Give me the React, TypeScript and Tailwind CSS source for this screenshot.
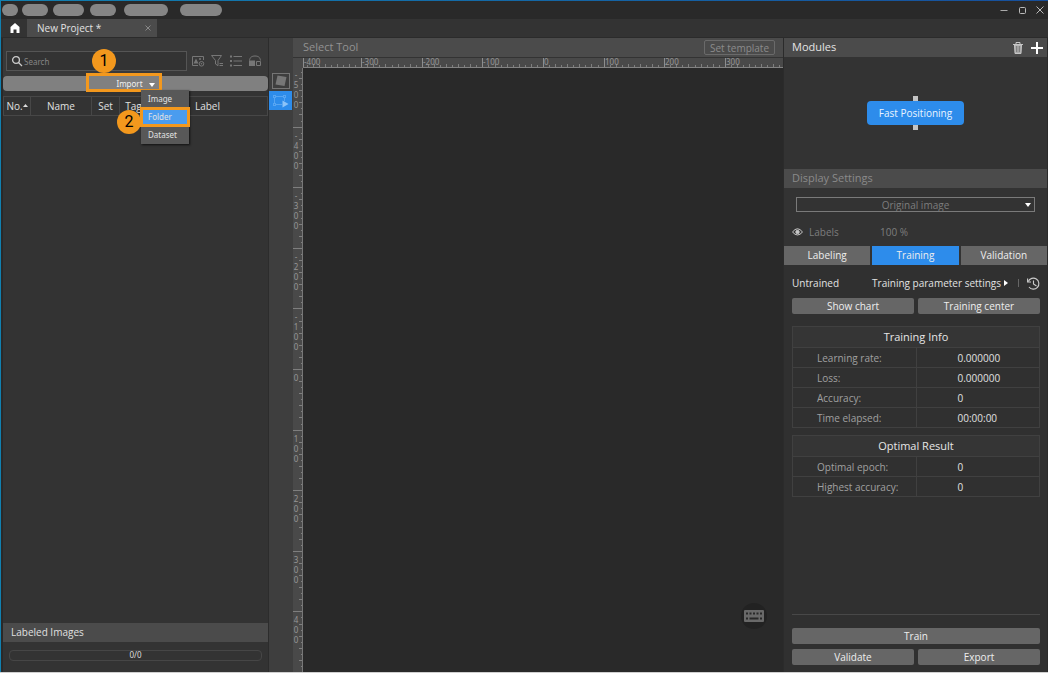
import React, { useLayoutEffect, useRef, useState } from "react";

const menus = ["w-4", "w-[26px]", "w-[31px]", "w-[26px]", "w-11", "w-[42px]"];
const menuGaps = ["ml-px", "ml-1", "ml-[5px]", "ml-1.5", "ml-2", "ml-3"];

const trainingInfo: [string, string][] = [
  ["Learning rate:", "0.000000"],
  ["Loss:", "0.000000"],
  ["Accuracy:", "0"],
  ["Time elapsed:", "00:00:00"],
];
const optimalResult: [string, string][] = [
  ["Optimal epoch:", "0"],
  ["Highest accuracy:", "0"],
];

const STEP = 60.6;

function useSize() {
  const ref = useRef<SVGSVGElement>(null);
  const [size, setSize] = useState({ width: 0, height: 0 });
  useLayoutEffect(() => {
    const el = ref.current;
    if (!el) return;
    const update = () => {
      const r = el.getBoundingClientRect();
      setSize({ width: r.width, height: r.height });
    };
    update();
    const observer = new ResizeObserver(update);
    observer.observe(el);
    return () => observer.disconnect();
  }, []);
  return { ref, size };
}

function HorizontalRuler() {
  const { ref, size } = useSize();
  const zero = 250;
  const ticks: React.ReactNode[] = [];
  const labels: React.ReactNode[] = [];
  for (let i = -40; zero + (i * STEP) / 10 < size.width; i++) {
    const x = Math.round(zero + (i * STEP) / 10) + (i === -40 ? 2 : 0);
    const major = i % 10 === 0;
    const h = major ? 10 : i % 2 === 0 ? 4 : 3;
    ticks.push(<line key={i} x1={x + 0.5} x2={x + 0.5} y1={10 - h} y2={10} stroke={major ? "#8d8d8d" : "#7e7e7e"} />);
    if (major && x + 20 < size.width) {
      labels.push(
        <text key={i} x={x + 1} y={7} fontSize="8" fill="#969696">
          {i * 10}
        </text>,
      );
    }
  }
  return (
    <svg ref={ref} className="block h-2.5 w-full shrink-0 overflow-visible bg-[#494949] font-['Noto_Sans',sans-serif]" aria-hidden="true">
      {ticks}
      {labels}
      <line x1="10" x2="100%" y1="9.5" y2="9.5" stroke="#828282" />
    </svg>
  );
}

function VerticalRuler() {
  const { ref, size } = useSize();
  const zero = 301;
  const ticks: React.ReactNode[] = [];
  const labels: React.ReactNode[] = [];
  for (let i = -49; zero + (i * STEP) / 10 < size.height; i++) {
    const y = Math.round(zero + (i * STEP) / 10);
    const w = i % 10 === 0 ? 10 : i % 2 === 0 ? 4 : 2;
    ticks.push(<line key={i} y1={y + 0.5} y2={y + 0.5} x1={10 - w} x2={10} stroke="#7e7e7e" />);
  }
  for (let n = -5; zero + n * STEP + 35 < size.height; n++) {
    const top = Math.round(zero + n * STEP) + 12;
    String(n * 100)
      .split("")
      .forEach((c, k) => {
        labels.push(
          <text key={`${n}-${k}`} x={3} y={top + k * 10} fontSize="8" textAnchor="middle" fill="#969696">
            {c}
          </text>,
        );
      });
  }
  return (
    <svg ref={ref} className="block h-full w-2.5 shrink-0 bg-[#494949] font-['Noto_Sans',sans-serif]" aria-hidden="true">
      {ticks}
      {labels}
      <line x1="9.5" x2="9.5" y1="0" y2="100%" stroke="#777" />
    </svg>
  );
}

function InfoTable({ title, rows }: { title: string; rows: [string, string][] }) {
  return (
    <table className="w-full table-fixed border-collapse border border-[#404040] text-[10px] leading-4">
      <thead>
        <tr className="h-[21px] bg-[#353535]">
          <th colSpan={2} className="border border-[#404040] p-0 text-[11px] font-normal text-[#e6e6e6]">
            {title}
          </th>
        </tr>
      </thead>
      <tbody>
        {rows.map(([label, value]) => (
          <tr key={label} className="h-5">
            <th scope="row" className="border border-[#404040] p-0 pl-6 text-left font-normal text-[#a0a0a0]">
              {label}
            </th>
            <td className="border border-[#404040] p-0 pl-[41px] text-[#e0e0e0]">{value}</td>
          </tr>
        ))}
      </tbody>
    </table>
  );
}

function PanelButton({ children }: { children: React.ReactNode }) {
  return (
    <button type="button" className="block h-4 w-full rounded-xs bg-[#666] text-[10px] leading-4 text-[#eee]">
      {children}
    </button>
  );
}

function Callout({ n }: { n: number }) {
  return (
    <span className="flex size-6 items-center justify-center rounded-full bg-[#f3981d] font-['Roboto',sans-serif] text-base leading-4 text-black">
      {n}
    </span>
  );
}

function LeftPanel() {
  return (
    <section className="flex w-[265px] shrink-0 flex-col bg-[#333]">
      <div className="flex h-[38px] items-end bg-[#393939] pb-[5px] pl-[3px]">
        <div className="flex h-5 w-[181px] items-center gap-px border border-[#555] bg-[#333] pl-1">
          <svg className="size-3 shrink-0" viewBox="0 0 12 12" fill="none" stroke="#ccc" strokeWidth="1.3">
            <circle cx="5" cy="5" r="3.4" />
            <path d="M7.5 7.5 11 11" />
          </svg>
          <input
            type="text"
            aria-label="Search images"
            placeholder="Search"
            className="h-4 w-16 bg-transparent font-['Noto_Sans',sans-serif] text-[8px] outline-none placeholder:text-[#858585]"
          />
        </div>
        <div className="flex h-5 flex-1 items-center justify-between pr-1.5 pl-1 text-[#777]">
          <button type="button" aria-label="Image display">
            <svg className="block size-3.5" viewBox="0 0 14 14" fill="none" stroke="currentColor">
              <path d="M7 11.500H1.500v-9h11V6" />
              <path d="M2.500 9.500 5 4.500l2.500 5z" fill="currentColor" stroke="none" />
              <circle cx="9" cy="5" r="1" fill="currentColor" stroke="none" />
              <circle cx="10.500" cy="9.800" r="2.300" />
              <circle cx="10.500" cy="9.800" r=".8" fill="currentColor" stroke="none" />
            </svg>
          </button>
          <button type="button" aria-label="Filter">
            <svg className="block size-3.5" viewBox="0 0 14 14" fill="none" stroke="currentColor">
              <path d="M1.500 1.500h10L8 6.500v5.200L5.500 10V6.500z" />
              <path d="M9.500 9.500H13M9.500 11.500H13" />
            </svg>
          </button>
          <button type="button" aria-label="List view">
            <svg className="block size-3.5" viewBox="0 0 14 14" fill="none" stroke="currentColor">
              <path d="M4.500 2.500H13M4.500 7H13M4.500 11.500H13" strokeWidth="1.200" />
              <path d="M1 2.500h2M1 7h2M1 11.500h2" strokeWidth="2" />
            </svg>
          </button>
          <button type="button" aria-label="Image unlock">
            <svg className="block size-3.5" viewBox="0 0 14 14" fill="none" stroke="currentColor">
              <path d="M1.500 6.500C2 3 4 2 7 2s5 1 5.500 4.500" />
              <path d="M1 6.500h6V12H1z" fill="currentColor" stroke="none" />
              <path d="M8.500 7.500h4v4h-4z" />
            </svg>
          </button>
        </div>
      </div>

      <div className="relative h-[15px] rounded-sm bg-[#808080] font-['Noto_Sans',sans-serif]">
        <button type="button" aria-haspopup="menu" className="flex h-[15px] w-full items-center justify-center gap-1.5 text-[8px] leading-3 text-[#f0f0f0]">
          Import
          <svg className="mt-0.5 h-1 w-1.5" viewBox="0 0 6 4" fill="#fff">
            <path d="M0 0h6L3 4z" />
          </svg>
        </button>
        <div className="pointer-events-none absolute -top-[3px] left-[83px] h-[19px] w-[76px] border-3 border-[#f3981d]" />
        <div className="absolute -top-[27px] left-[89px]">
          <Callout n={1} />
        </div>
        <div role="menu" className="absolute top-3.5 left-[138px] z-10 flex w-12 flex-col bg-[#585858] text-[8px] leading-3 text-[#e2e2e2] shadow-[1px_1px_2px_#111]">
          <button type="button" role="menuitem" className="h-[18px] pl-[7px] text-left">Image</button>
          <button type="button" role="menuitem" className="h-[18px] bg-[#4a9cef] pl-[7px] text-left outline-3 -outline-offset-2 outline-[#f3981d]">Folder</button>
          <button type="button" role="menuitem" className="h-[18px] pl-[7px] text-left">Dataset</button>
        </div>
        <div className="absolute top-[34px] left-[114px] z-20">
          <Callout n={2} />
        </div>
      </div>

      <table className="mt-[5px] w-full table-fixed border-collapse text-[10px] leading-4 text-[#e0e0e0]">
        <thead>
          <tr className="h-[19px]">
            <th className="w-[27px] border border-[#474747] p-0 font-normal whitespace-nowrap">
              <span className="flex items-center justify-center">
                No.
                <svg className="mb-0.5 h-[3px] w-[5px]" viewBox="0 0 5 3" fill="#ddd">
                  <path d="M0 3h5L2.500 0z" />
                </svg>
              </span>
            </th>
            <th className="w-[61px] border border-[#474747] p-0 font-normal">Name</th>
            <th className="w-7 border border-[#474747] p-0 font-normal">Set</th>
            <th className="w-7 border border-[#474747] p-0 font-normal">Tag</th>
            <th className="border border-[#474747] p-0 font-normal">Label</th>
          </tr>
        </thead>
      </table>

      <div className="flex-1" />
      <h2 className="flex h-[19px] items-center bg-[#4b4b4b] pl-2 text-[10px] text-[#e0e0e0]">Labeled Images</h2>
      <div className="flex h-[30px] items-center px-1.5 pb-1">
        <div className="flex h-[11px] w-full items-center justify-center rounded-sm border border-[#464646] font-['Noto_Sans',sans-serif] text-[8px] text-[#ddd]">0/0</div>
      </div>
    </section>
  );
}

function ToolStrip() {
  return (
    <div className="flex w-[25px] shrink-0 flex-col border-l border-[#2c2c2c] bg-[#3e3e3e] pt-8 pr-px">
      <button type="button" aria-label="Rotate region" className="flex h-[21px] w-full items-center justify-center">
        <svg className="h-4 w-[18px]" viewBox="0 0 18 16">
          <rect x=".5" y=".5" width="17" height="15" fill="none" stroke="#757575" />
          <path d="M5.500 2.500 14.500 4 12.500 13 3.500 11.500z" fill="#777" />
        </svg>
      </button>
      <button type="button" aria-label="Select tool" className="flex h-[19px] w-full items-center justify-center bg-[#2d8ceb]">
        <svg className="h-3.5 w-[17px]" viewBox="0 0 17 14" fill="none" stroke="#57a5f2">
          <path d="M2.500 4v5M4 2.500h7M4 10.500h6M12.500 4v3" />
          <rect x="1.500" y="1.500" width="2" height="2" />
          <rect x="11.500" y="1.500" width="2" height="2" />
          <rect x="1.500" y="9.500" width="2" height="2" />
          <path d="M10.500 6.500v7l6-3.500z" fill="#8cc3f8" stroke="none" />
        </svg>
      </button>
    </div>
  );
}

function CanvasPanel() {
  return (
    <main className="flex min-w-0 flex-1 flex-col">
      <div className="flex h-[19px] shrink-0 items-center justify-between bg-[#4b4b4b] pr-2 pl-2.5">
        <h2 className="text-[11px] text-[#929292]">Select Tool</h2>
        <button type="button" className="h-[15px] w-[71px] rounded-xs border border-[#6a6a6a] text-[10px] leading-3 whitespace-nowrap text-[#8c8c8c]">
          Set template
        </button>
      </div>
      <div className="h-px shrink-0 bg-[#333]" />
      <HorizontalRuler />
      <div className="flex min-h-0 flex-1">
        <VerticalRuler />
        <div className="flex flex-1 items-end justify-end bg-[#292929] pr-4 pb-[43px]">
          <button type="button" aria-label="Keyboard shortcuts" className="flex size-[26px] items-center justify-center rounded-full bg-[#222]">
            <svg className="h-3 w-5" viewBox="0 0 20 12">
              <rect width="20" height="12" rx="1" fill="#696969" />
              <path d="M2 3.500h2M5.500 3.500h2M9 3.500h2M12.500 3.500h2M16 3.500h2M2 8.500h2M5.500 8.500h9M16 8.500h2" stroke="#282828" strokeWidth="2" />
            </svg>
          </button>
        </div>
      </div>
    </main>
  );
}

function RightPanel() {
  return (
    <aside className="flex w-[265px] shrink-0 flex-col border-x border-[#2b2b2b] bg-[#333]">
      <header className="flex h-[19px] items-center bg-[#4b4b4b] pl-2">
        <h2 className="flex-1 text-[11px] text-[#e4e4e4]">Modules</h2>
        <button type="button" aria-label="Delete module" className="mr-2">
          <svg className="block h-3 w-2.5" viewBox="0 0 10 12" fill="none" stroke="#c6c6c6">
            <path d="M0 2.500h10M3 2V.500h4V2" />
            <path d="M1.500 3h7L8 11.500H2z" fill="#aaa" />
            <path d="M3.700 4v6M6.300 4v6" stroke="#777" />
          </svg>
        </button>
        <button type="button" aria-label="Add module" className="mr-1">
          <svg className="block size-3" viewBox="0 0 12 12" stroke="#fff" strokeWidth="2">
            <path d="M6 0v12M0 6h12" />
          </svg>
        </button>
      </header>

      <div className="flex h-[112px] flex-col items-center justify-center">
        <span className="h-[5px] w-[5px] bg-[#c4c4c4]" />
        <button type="button" className="h-6 w-[97px] rounded-sm bg-[#2d8ceb] text-[10px] text-[#eaf4ff]">Fast Positioning</button>
        <span className="h-[5px] w-[5px] bg-[#c4c4c4]" />
      </div>

      <h2 className="flex h-[19px] items-center bg-[#4b4b4b] pl-2 text-[11px] text-[#8a8a8a]">Display Settings</h2>
      <div className="relative mx-3 mt-[9px]">
        <select aria-label="Displayed image" className="block h-[15px] w-full appearance-none border border-[#7a7a7a] bg-[#333] p-0 text-center text-[10px] leading-3 text-[#7d7d7d] [text-align-last:center]">
          <option>Original image</option>
        </select>
        <svg className="pointer-events-none absolute top-1.5 right-1 h-1 w-1.5" viewBox="0 0 6 4" fill="#fff">
          <path d="M0 0h6L3 4z" />
        </svg>
      </div>
      <div className="mt-3 flex h-4 items-center pl-2 text-[10px] text-[#7d7d7d]">
        <svg className="h-2 w-[11px]" viewBox="0 0 11 8" fill="none" stroke="#c8c8c8">
          <path d="M.500 4Q5.500-2.500 10.500 4 5.500 10 .500 4z" />
          <circle cx="5.500" cy="4" r="1.700" fill="#c8c8c8" />
        </svg>
        <span className="ml-1.5 w-[71px]">Labels</span>
        <span>100 %</span>
      </div>

      <div role="tablist" className="mt-1.5 grid h-[19px] grid-cols-3 gap-0.5 text-[10px] text-[#eee]">
        <button type="button" role="tab" className="bg-[#666]">Labeling</button>
        <button type="button" role="tab" aria-selected="true" className="bg-[#2d8ceb]">Training</button>
        <button type="button" role="tab" className="bg-[#666]">Validation</button>
      </div>

      <div className="flex min-h-0 flex-1 flex-col bg-[#303030] pr-[7px] pb-[7px] pl-2">
        <div className="mt-2.5 flex h-4 items-center text-[10px] text-[#e2e2e2]">
          <span className="flex-1">Untrained</span>
          <button type="button" className="flex items-center gap-[3px] whitespace-nowrap">
            Training parameter settings
            <svg className="h-1.5 w-1" viewBox="0 0 4 6" fill="#fff">
              <path d="M0 0v6l4-3z" />
            </svg>
          </button>
          <span className="ml-2.5 h-2 w-px bg-[#666]" />
          <button type="button" aria-label="Training history" className="ml-2">
            <svg className="block size-[13px]" viewBox="0 0 13 13" fill="none" stroke="#ccc" strokeWidth="1.100">
              <path d="M1.300 4.500A5.500 5.500 0 1 1 2 10" />
              <path d="M.600 1.500v3.500H4M6.500 3.500V7l3 2" />
            </svg>
          </button>
        </div>
        <div className="mt-[7px] grid grid-cols-2 gap-1">
          <PanelButton>Show chart</PanelButton>
          <PanelButton>Training center</PanelButton>
        </div>
        <div className="mt-3 flex flex-col gap-[7px]">
          <InfoTable title="Training Info" rows={trainingInfo} />
          <InfoTable title="Optimal Result" rows={optimalResult} />
        </div>
        <div className="flex-1" />
        <hr className="mb-[13px] border-[#484848]" />
        <div className="grid grid-cols-2 gap-x-1 gap-y-[5px]">
          <div className="col-span-2"><PanelButton>Train</PanelButton></div>
          <PanelButton>Validate</PanelButton>
          <PanelButton>Export</PanelButton>
        </div>
      </div>
    </aside>
  );
}

export default function App() {
  return (
    <div className="flex h-screen min-h-[560px] flex-col border-b border-[#d0d0d0] bg-[#292929] font-['Open_Sans',sans-serif]">
      <div className="h-px shrink-0 bg-linear-to-r from-[#1180b0] to-[#174f9c]" />
      <div className="flex min-h-0 flex-1 flex-col border-l border-[#1180b0]">
        <header className="flex h-[18px] shrink-0 items-center bg-[#292929]">
          {menus.map((w, i) => (
            <span key={i} className={`h-3 rounded-full bg-[#858585] ${w} ${menuGaps[i]}`} />
          ))}
          <div className="ml-auto flex items-center gap-2.5 pr-1">
            <button type="button" aria-label="Minimize">
              <svg className="block size-2" viewBox="0 0 8 8" stroke="#aaa"><path d="M.500 4.500h7" /></svg>
            </button>
            <button type="button" aria-label="Maximize">
              <svg className="block size-2" viewBox="0 0 8 8" fill="none" stroke="#bbb"><rect x="1.500" y="1.500" width="6" height="6" rx="1" /></svg>
            </button>
            <button type="button" aria-label="Close">
              <svg className="block size-2" viewBox="0 0 8 8" stroke="#bbb"><path d="m.500.500 7 7m0-7-7 7" /></svg>
            </button>
          </div>
        </header>
        <nav className="flex h-[19px] shrink-0 items-stretch border-b border-[#2b2b2b] bg-[#333]">
          <button type="button" aria-label="Home" className="flex w-[26px] items-center justify-center pl-0.5">
            <svg className="h-2.5 w-2.5" viewBox="0 0 10 10" fill="#fff">
              <path d="M5 0 .500 4v6h3V6.500h3V10h3V4z" />
            </svg>
          </button>
          <div className="flex w-[130px] items-center justify-between bg-[#4b4b4b] pr-1.5 pl-2.5 text-[10px] text-[#e2e2e2]">
            New Project *
            <button type="button" aria-label="Close project">
              <svg className="block size-1.5" viewBox="0 0 6 6" stroke="#888"><path d="m.500.500 5 5m0-5-5 5" /></svg>
            </button>
          </div>
        </nav>
        <div className="flex min-h-0 flex-1 pl-0.5">
          <LeftPanel />
          <ToolStrip />
          <CanvasPanel />
          <RightPanel />
        </div>
      </div>
    </div>
  );
}
